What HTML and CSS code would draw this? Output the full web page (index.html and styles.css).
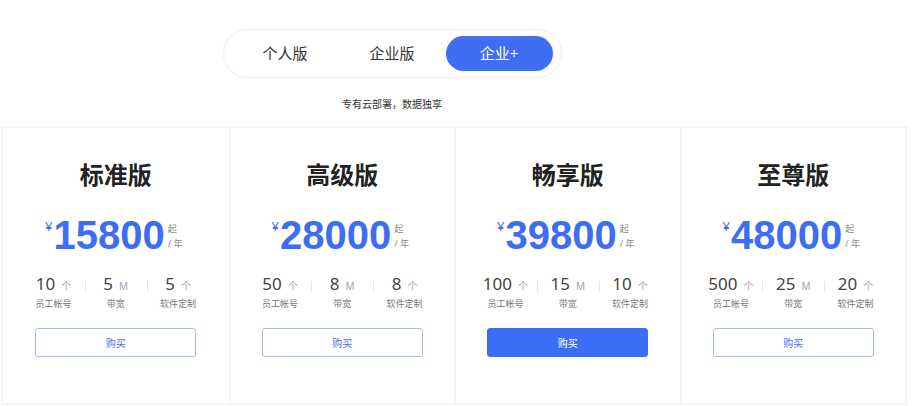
FILE: index.html
```html
<!DOCTYPE html>
<html lang="zh-CN">
<head>
<meta charset="utf-8">
<title>价格方案</title>
<link rel="stylesheet" href="styles.css">
</head>
<body>
<div class="header">
  <div class="tabs">
    <div class="tab">个人版</div>
    <div class="tab">企业版</div>
    <div class="tab active">企业+</div>
  </div>
  <p class="subtitle">专有云部署，数据独享</p>
</div>
<div class="plans">
  <div class="plan">
    <h2 class="plan-title">标准版</h2>
    <div class="price"><span class="cur">¥</span><span class="amount">15800</span><span class="per"><span>起</span><span>/ 年</span></span></div>
    <div class="stats">
      <div class="stat"><div class="val">10<span class="unit">个</span></div><div class="lbl">员工帐号</div></div>
      <div class="stat"><div class="val">5<span class="unit">M</span></div><div class="lbl">带宽</div></div>
      <div class="stat"><div class="val">5<span class="unit">个</span></div><div class="lbl">软件定制</div></div>
    </div>
    <button class="buy">购买</button>
  </div>
  <div class="plan">
    <h2 class="plan-title">高级版</h2>
    <div class="price"><span class="cur">¥</span><span class="amount">28000</span><span class="per"><span>起</span><span>/ 年</span></span></div>
    <div class="stats">
      <div class="stat"><div class="val">50<span class="unit">个</span></div><div class="lbl">员工帐号</div></div>
      <div class="stat"><div class="val">8<span class="unit">M</span></div><div class="lbl">带宽</div></div>
      <div class="stat"><div class="val">8<span class="unit">个</span></div><div class="lbl">软件定制</div></div>
    </div>
    <button class="buy">购买</button>
  </div>
  <div class="plan">
    <h2 class="plan-title">畅享版</h2>
    <div class="price"><span class="cur">¥</span><span class="amount">39800</span><span class="per"><span>起</span><span>/ 年</span></span></div>
    <div class="stats">
      <div class="stat"><div class="val">100<span class="unit">个</span></div><div class="lbl">员工帐号</div></div>
      <div class="stat"><div class="val">15<span class="unit">M</span></div><div class="lbl">带宽</div></div>
      <div class="stat"><div class="val">10<span class="unit">个</span></div><div class="lbl">软件定制</div></div>
    </div>
    <button class="buy primary">购买</button>
  </div>
  <div class="plan">
    <h2 class="plan-title">至尊版</h2>
    <div class="price"><span class="cur">¥</span><span class="amount">48000</span><span class="per"><span>起</span><span>/ 年</span></span></div>
    <div class="stats">
      <div class="stat"><div class="val">500<span class="unit">个</span></div><div class="lbl">员工帐号</div></div>
      <div class="stat"><div class="val">25<span class="unit">M</span></div><div class="lbl">带宽</div></div>
      <div class="stat"><div class="val">20<span class="unit">个</span></div><div class="lbl">软件定制</div></div>
    </div>
    <button class="buy">购买</button>
  </div>
</div>
</body>
</html>
```

FILE: styles.css
```css
* { box-sizing: border-box; }
body {
  margin: 0;
  background: #fff;
  font-family: "Noto Sans", "Noto Sans CJK SC", sans-serif;
  color: #333;
}
.header {
  width: 784px;
  display: flex;
  flex-direction: column;
  align-items: center;
  padding-top: 29px;
}
.tabs {
  display: flex;
  padding: 6px 8px;
  border: 1px solid #eeeeee;
  border-radius: 25px;
}
.tab {
  width: 107px;
  height: 35px;
  line-height: 35px;
  text-align: center;
  font-size: 15px;
  color: #333;
  border-radius: 18px;
}
.tab.active {
  background: #3f6ef5;
  color: #fff;
}
.subtitle {
  margin: 19px 0 0;
  font-size: 10px;
  line-height: 14px;
  color: #333;
}
.plans {
  margin: 15px 0 0 1px;
  width: 906px;
  display: grid;
  grid-template-columns: repeat(4, 1fr);
  border: 2px solid #f4f4f4;
}
.plan {
  display: flex;
  flex-direction: column;
  align-items: center;
  padding: 31px 0 46px;
}
.plan + .plan { border-left: 2px solid #f4f4f4; }
.plan-title {
  margin: 0;
  font-size: 24px;
  line-height: 32px;
  font-weight: 700;
  color: #222;
}
.price {
  display: flex;
  align-items: flex-start;
  margin-top: 22px;
  margin-left: -4px;
  color: #3d6df5;
}
.cur {
  font-size: 13px;
  line-height: 16px;
  margin-top: 5px;
  margin-right: 1px;
}
.amount {
  font-family: "Liberation Sans", Arial, sans-serif;
  font-size: 40px;
  font-weight: 700;
  line-height: 44px;
}
.per {
  display: flex;
  flex-direction: column;
  font-size: 9px;
  line-height: 15px;
  color: #888;
  margin-left: 3px;
  margin-top: 8px;
}
.stats {
  display: flex;
  margin-top: 16px;
  width: 187px;
}
.stat {
  flex: 1;
  display: flex;
  flex-direction: column;
  align-items: center;
  position: relative;
}
.stat + .stat::before {
  content: "";
  position: absolute;
  left: 0;
  top: 8px;
  width: 1px;
  height: 12px;
  background: #e6e6e6;
}
.val {
  font-size: 17px;
  line-height: 22px;
  color: #444;
}
.unit {
  font-size: 10px;
  color: #a09cb4;
  margin-left: 6px;
}
.lbl {
  font-size: 9px;
  line-height: 13px;
  color: #777;
}
.buy {
  margin-top: 18px;
  width: 161px;
  height: 29px;
  border: 1px solid #a3baf8;
  border-radius: 3px;
  background: #fff;
  color: #4a6ff0;
  font-family: "Noto Sans CJK SC", sans-serif;
  font-size: 10px;
  cursor: pointer;
}
.buy.primary {
  background: #3b6ef5;
  border-color: #3b6ef5;
  color: #fff;
}
```
